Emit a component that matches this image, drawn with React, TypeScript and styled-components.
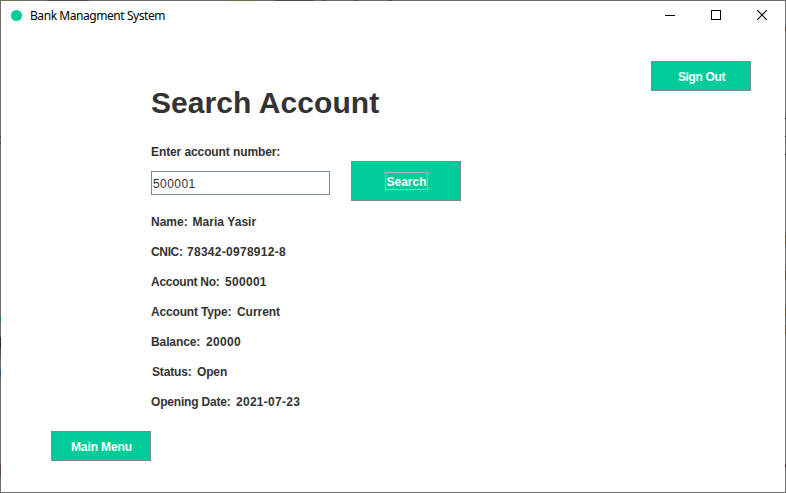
import React, { useState } from "react";
import styled, { createGlobalStyle } from "styled-components";

const GlobalStyle = createGlobalStyle`
  * { box-sizing: border-box; }
  html, body { margin: 0; padding: 0; overflow: hidden; }
`;

const green = "#00cc99";
const steel = "#7a8a99";

const Frame = styled.div`
  width: 786px;
  height: 493px;
  padding: 1px;
  display: flex;
  background:
    linear-gradient(90deg, #756c50 0 26px, transparent 26px 47px, #504d50 47px 89px, transparent 89px 229px, #756540 229px 254px, transparent 254px 275px, #4c4650 275px 314px, transparent 314px 322px, #55484f 322px 326px, transparent 326px 354px, #55484f 354px 358px, transparent 358px 388px, #55484f 388px 392px, transparent 392px) 0 0 / 100% 1px no-repeat,
    linear-gradient(transparent 136px, #173a5c 136px 137px, transparent 137px 143px, #173a5c 143px 144px, transparent 144px 317px, #147a60 317px 322px, transparent 322px 337px, #2b2b2b 337px 348px, #6b4a35 348px 357px, transparent 357px 370px, #1b6180 370px 377px, transparent 377px 464px, #5d4640 464px 476px, transparent 476px) 0 0 / 1px 100% no-repeat,
    linear-gradient(transparent 27px, #5d4a35 27px 31px, transparent 31px 118px, #222 118px 119px, transparent 119px 136px, #222 136px 137px, transparent 137px 154px, #222 154px 155px, transparent 155px 235px, #6d5638 235px 244px, transparent 244px 271px, #6d5638 271px 280px, transparent 280px 308px, #6d5638 308px 316px, transparent 316px 325px, #6d5638 325px 334px, transparent 334px 464px, #3b2930 464px 467px, transparent 467px) 100% 0 / 1px 100% no-repeat,
    #6d6d6f;
`;

const Panel = styled.div`
  flex: 1;
  display: flex;
  flex-direction: column;
  background: #fff;
  font: bold 12px/16px "Liberation Sans", Arial, sans-serif;
  color: #333;
`;

const TitleBar = styled.header`
  height: 30px;
  display: flex;
  align-items: center;
  padding-left: 10px;
  font: 12px/16px "Noto Sans", sans-serif;
  color: #000;
`;

const Dot = styled.span`
  width: 11px;
  height: 11px;
  margin: 0 8px 2px 0;
  border-radius: 50%;
  background: ${green};
`;

const Caption = styled.span`
  flex: 1;
  letter-spacing: -0.44px;
`;

const Control = styled.button`
  width: 46px;
  height: 30px;
  padding: 0 0 2px;
  border: 0;
  background: none;
  display: flex;
  justify-content: center;
  align-items: center;
`;

const Body = styled.main`
  flex: 1;
  display: grid;
  grid-template-columns: 100px 500px 100px;
  grid-template-rows: 30px 340px 30px;
  padding: 30px 34px 31px 50px;
`;

const Content = styled.section`
  grid-column: 2;
  grid-row: 1 / 3;
  padding-top: 23px;
`;

const Heading = styled.h1`
  margin: 0;
  font-size: 30px;
  line-height: 38px;
  letter-spacing: 0.07px;
`;

const SearchRow = styled.div`
  display: flex;
  align-items: flex-start;
  gap: 21px;
  margin-top: 17px;
`;

const Field = styled.label`
  width: 179px;
  display: flex;
  flex-direction: column;
  padding-top: 5px;
  white-space: nowrap;
`;

const Text = styled.span<{ $spacing?: number }>`
  letter-spacing: ${(p) => p.$spacing ?? 0}px;
`;

const Input = styled.input`
  height: 24px;
  width: 179px;
  margin-top: 11px;
  padding: 1px 0 0 1px;
  border: 1px solid ${steel};
  background: #fff;
  outline: 0;
  color: #333;
  font: 12px "Liberation Sans", Arial, sans-serif;
  letter-spacing: 0.45px;
`;

const Button = styled.button`
  width: 100px;
  height: 30px;
  padding: 1px 0 0 1px;
  border: 1px solid ${steel};
  background: ${green};
  color: #fff;
  font: inherit;
  display: flex;
  align-items: center;
  justify-content: center;
`;

const SearchButton = styled(Button)`
  width: 110px;
  height: 40px;
  margin-top: 22px;
  padding-top: 0;
`;

const TopRight = styled.div`
  grid-column: 3;
  grid-row: 1;
`;

const BottomLeft = styled.div`
  grid-column: 1;
  grid-row: 3;
`;

const FocusRing = styled.span`
  width: 43px;
  height: 18px;
  border: 1px solid #a3b8cc;
  line-height: 18px;
`;

const Details = styled.dl`
  display: flex;
  flex-direction: column;
  gap: 14px;
  margin: 13px 0 0;
`;

const Detail = styled.div`
  height: 16px;
  display: flex;
  white-space: nowrap;
`;

const Term = styled.dt<{ $width: number; $spacing: number; $indent?: number }>`
  width: ${(p) => p.$width}px;
  padding-left: ${(p) => p.$indent ?? 0}px;
  letter-spacing: ${(p) => p.$spacing}px;
`;

const Value = styled.dd<{ $spacing: number }>`
  margin: 0;
  letter-spacing: ${(p) => p.$spacing}px;
`;

const details = [
  { term: "Name:", value: "Maria Yasir", width: 41.5, tracking: 0, valueTracking: 0.05 },
  { term: "CNIC:", value: "78342-0978912-8", width: 36, tracking: -0.35, valueTracking: 0.28 },
  { term: "Account No:", value: "500001", width: 74, tracking: -0.25, valueTracking: 0.3 },
  { term: "Account Type:", value: "Current", width: 86, tracking: -0.17, valueTracking: -0.05 },
  { term: "Balance:", value: "20000", width: 55, tracking: -0.1, valueTracking: 0.3 },
  { term: "Status:", value: "Open", width: 46, tracking: -0.15, valueTracking: -0.15, indent: 1 },
  { term: "Opening Date:", value: "2021-07-23", width: 85, tracking: -0.18, valueTracking: 0.28 },
];

export default function App() {
  const [account, setAccount] = useState("500001");
  return (
    <>
      <GlobalStyle />
      <Frame>
        <Panel>
          <TitleBar>
            <Dot />
            <Caption>Bank Managment System</Caption>
            <Control aria-label="Minimize">
              <svg width="10" height="10" shapeRendering="crispEdges"><path d="M0 5h10v1H0z" /></svg>
            </Control>
            <Control aria-label="Maximize">
              <svg width="10" height="10" shapeRendering="crispEdges"><path d="M.5.5h9v9h-9z" fill="none" stroke="#000" /></svg>
            </Control>
            <Control aria-label="Close">
              <svg width="10" height="10"><path d="M0 0l10 10M10 0L0 10" stroke="#000" strokeWidth="1.1" /></svg>
            </Control>
          </TitleBar>
          <Body>
            <TopRight>
              <Button><Text $spacing={-0.35}>Sign Out</Text></Button>
            </TopRight>
            <Content>
              <Heading>Search Account</Heading>
              <SearchRow>
                <Field>
                  <Text $spacing={-0.1}>Enter account number:</Text>
                  <Input value={account} onChange={(e) => setAccount(e.target.value)} />
                </Field>
                <SearchButton><FocusRing>Search</FocusRing></SearchButton>
              </SearchRow>
              <Details>
                {details.map((d) => (
                  <Detail key={d.term}>
                    <Term $width={d.width} $spacing={d.tracking} $indent={d.indent}>{d.term}</Term>
                    <Value $spacing={d.valueTracking}>{d.value}</Value>
                  </Detail>
                ))}
              </Details>
            </Content>
            <BottomLeft>
              <Button><Text $spacing={-0.1}>Main Menu</Text></Button>
            </BottomLeft>
          </Body>
        </Panel>
      </Frame>
    </>
  );
}
